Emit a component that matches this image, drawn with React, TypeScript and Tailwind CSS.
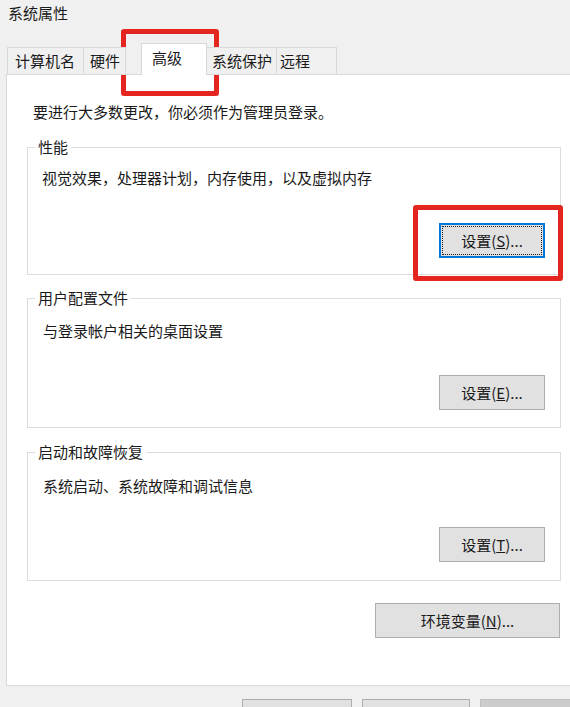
const SettingsButton = ({
    hotkey,
    focused = false,
}: {
    hotkey: string;
    focused?: boolean;
}) => (
    <button
        className={
            focused
                ? "w-[106px] h-[35px] bg-[#e1e1e1] border-2 border-[#0078d7] outline-1 outline-dotted outline-[#1a1a1a] outline-offset-[-4px] text-[15px] leading-5 text-[#1a1a1a]"
                : "w-[106px] h-[35px] bg-[#e1e1e1] border border-[#adadad] text-[15px] leading-5 text-[#1a1a1a]"
        }
    >
        设置(<span className="underline">{hotkey}</span>)...
    </button>
);

const App = () => {
    return (
        <div className="relative w-[570px] h-[707px] overflow-hidden bg-[#f0f0f0] text-[#1a1a1a] font-['Noto_Sans_CJK_SC','Microsoft_YaHei',sans-serif]">
            {/* title */}
            <div className="pl-[8px] pt-[3px] text-[15px] leading-5">系统属性</div>

            {/* tabs */}
            <div className="relative z-10 flex items-end pl-[7px] mt-[20px] -mb-px text-[15px] leading-5">
                <div className="h-[28px] w-[76px] flex items-center pl-[7px] bg-[#f0f0f0] border-l border-t border-b border-[#d9d9d9]">
                    计算机名
                </div>
                <div className="h-[28px] w-[43px] flex items-center pl-[6px] bg-[#f0f0f0] border-l border-t border-r border-b border-[#d9d9d9]">
                    硬件
                </div>
                <div className="w-[15px]" />
                <div className="h-[32px] w-[66px] flex items-center pl-[10px] pb-[3px] bg-white border-l border-t border-r border-[#d9d9d9]">
                    高级
                </div>
                <div className="h-[28px] w-[69px] flex items-center pl-[5px] bg-[#f0f0f0] border-t border-b border-[#d9d9d9]">
                    系统保护
                </div>
                <div className="h-[28px] w-[61px] flex items-center pl-[3px] bg-[#f0f0f0] border-l border-t border-r border-b border-[#d9d9d9]">
                    远程
                </div>
            </div>

            {/* panel */}
            <div className="ml-[6px] w-[580px] h-[612px] bg-white border border-[#d9d9d9] px-[20px] pt-[27px] text-[15px] leading-5">
                <div className="pl-[6px]">要进行大多数更改，你必须作为管理员登录。</div>

                <fieldset className="mt-[15px] w-[534px] border border-[#dcdcdc] pb-[16px]">
                    <legend className="ml-[7px] px-[3px] leading-5">性能</legend>
                    <div className="pt-[11px] pl-[14px]">视觉效果，处理器计划，内存使用，以及虚拟内存</div>
                    <div className="mt-[35px] pr-[15px] flex justify-end">
                        <SettingsButton hotkey="S" focused />
                    </div>
                </fieldset>

                <fieldset className="mt-[13px] w-[534px] border border-[#dcdcdc] pb-[17px]">
                    <legend className="ml-[7px] px-[3px] leading-5">用户配置文件</legend>
                    <div className="pt-[13px] pl-[15px]">与登录帐户相关的桌面设置</div>
                    <div className="mt-[34px] pr-[15px] flex justify-end">
                        <SettingsButton hotkey="E" />
                    </div>
                </fieldset>

                <fieldset className="mt-[14px] w-[534px] border border-[#dcdcdc] pb-[18px]">
                    <legend className="ml-[7px] px-[3px] leading-5">启动和故障恢复</legend>
                    <div className="pt-[14px] pl-[15px]">系统启动、系统故障和调试信息</div>
                    <div className="mt-[31px] pr-[15px] flex justify-end">
                        <SettingsButton hotkey="T" />
                    </div>
                </fieldset>

                <div className="w-[533px] mt-[22px] flex justify-end">
                    <button className="w-[185px] h-[35px] bg-[#e1e1e1] border border-[#adadad] text-[15px] leading-5">
                        环境变量(<span className="underline">N</span>)...
                    </button>
                </div>
            </div>

            {/* dialog buttons, cut off by the bottom edge */}
            <div className="flex gap-[10px] pl-[242px] mt-[13px]">
                <div className="w-[110px] h-[35px] shrink-0 bg-[#e1e1e1] border border-[#adadad]" />
                <div className="w-[108px] h-[35px] shrink-0 bg-[#e1e1e1] border border-[#adadad]" />
                <div className="w-[110px] h-[35px] shrink-0 bg-[#cccccc] border border-[#bfbfbf]" />
            </div>

            {/* red annotation boxes */}
            <div className="absolute left-[121px] top-[29px] w-[98px] h-[67px] border-[5px] border-[#e52620] rounded-[3px]" />
            <div className="absolute left-[413px] top-[205px] w-[150px] h-[76px] border-[5px] border-[#e52620] rounded-[3px]" />
        </div>
    );
};

export default App;
